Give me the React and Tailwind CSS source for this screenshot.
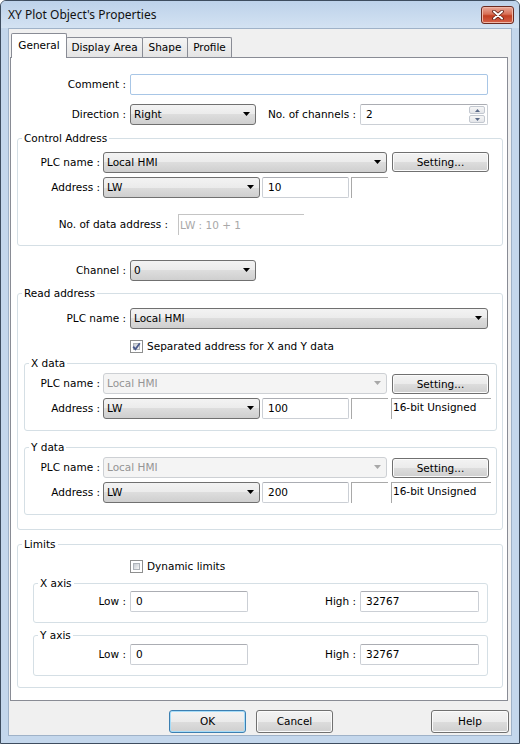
import React from "react";

const grayGrad = "bg-[linear-gradient(#f3f3f3,#ebebeb_50%,#dddddd_50%,#cfcfcf)]";

const Label = ({ className = "", children }) => (
  <div className={`shrink-0 whitespace-nowrap text-right ${className}`}>{children}</div>
);

const Combo = ({ className = "", value, disabled }) => (
  <div
    className={`relative flex h-[21px] shrink-0 items-center rounded-[3px] border pl-[3px] ${
      disabled
        ? "border-[#cdd0d4] bg-[#f4f4f4] text-[#959595]"
        : `border-[#707070] ${grayGrad} text-black`
    } ${className}`}
  >
    {value}
    <svg className="absolute right-[5px] top-[7px]" width="7" height="4" viewBox="0 0 7 4">
      <path d="M0 0h7L3.5 4z" fill={disabled ? "#a8a8a8" : "#000"} />
    </svg>
  </div>
);

const Field = ({ className = "", value, blue, children }) => (
  <div
    className={`relative flex h-[21px] shrink-0 items-center rounded-[2px] border bg-white pl-[5px] ${
      blue ? "border-[#a8c6e6]" : "border-[#cbcfd5] border-t-[#abadb3]"
    } ${className}`}
  >
    {value}
    {children}
  </div>
);

const Sunken = ({ className = "", children }) => (
  <div className={`h-[21px] shrink-0 border-l border-t border-[#a9a9a9] pl-[1px] pt-[2px] ${className}`}>
    {children}
  </div>
);

const Btn = ({ className = "", primary, children }) => (
  <div
    className={`flex shrink-0 items-center justify-center rounded-[3px] border ${grayGrad} ${
      primary
        ? "border-[#3c7fb1] shadow-[inset_0_0_0_1px_#a6dcf8]"
        : "border-[#707070] shadow-[inset_0_0_0_1px_#fbfbfb]"
    } ${className}`}
  >
    {children}
  </div>
);

const Check = ({ checked }) => (
  <div className="relative h-[13px] w-[13px] shrink-0 border border-[#8e8f8f] bg-white p-[2px]">
    <div className="h-full w-full border border-[#aeb3b9] bg-[linear-gradient(135deg,#c7ccd3,#f6f6f6)]" />
    {checked && (
      <svg className="absolute left-0 top-0" width="11" height="11" viewBox="0 0 11 11">
        <path d="M2.2 5.6L4.4 8.2L8.8 2.2" fill="none" stroke="#4a5a8c" strokeWidth="1.8" />
      </svg>
    )}
  </div>
);

const Group = ({ title, className = "", children }) => (
  <div className={`relative flex shrink-0 flex-col rounded-[3px] border border-[#d5dfe5] ${className}`}>
    <div className="absolute left-[4px] top-[-8px] bg-white px-[2px] leading-[14px]">{title}</div>
    {children}
  </div>
);

const Spinner = () => (
  <div className="absolute right-[2px] top-[1px] flex flex-col gap-[1px]">
    {["M0 3h5L2.5 0z", "M0 0h5L2.5 3z"].map((d) => (
      <div
        key={d}
        className="flex h-[8px] w-[16px] items-center justify-center rounded-[2px] border border-[#c3c8d0] bg-[linear-gradient(#f6f6f6,#e4e6ea)]"
      >
        <svg width="5" height="3" viewBox="0 0 5 3">
          <path d={d} fill="#5a6a88" />
        </svg>
      </div>
    ))}
  </div>
);

const DataGroup = ({ title, value, className = "" }) => (
  <Group title={title} className={`ml-[6px] h-[68px] w-[473px] ${className}`}>
    <div className="mt-[9px] flex items-start">
      <Label className="w-[75px] pt-[4px]">PLC name :</Label>
      <Combo className="ml-[3px] w-[284px]" value="Local HMI" disabled />
      <Btn className="ml-[5px] mt-[1px] h-[20px] w-[97px]">Setting...</Btn>
    </div>
    <div className="mt-[4px] flex items-center">
      <Label className="w-[75px]">Address :</Label>
      <Combo className="ml-[3px] w-[157px]" value="LW" />
      <Field className="ml-[2px] w-[87px]" value={value} />
      <Sunken className="ml-[2px] w-[37px]" />
      <Sunken className="ml-[3px] w-[100px]">16-bit Unsigned</Sunken>
    </div>
  </Group>
);

const AxisGroup = ({ title, className = "" }) => (
  <Group title={title} className={`ml-[15px] w-[455px] ${className}`}>
    <div className="flex items-center">
      <Label className="w-[92px]">Low :</Label>
      <Field className="ml-[4px] w-[118px]" value="0" />
      <Label className="w-[108px]">High :</Label>
      <Field className="ml-[4px] w-[119px]" value="32767" />
    </div>
  </Group>
);

export default function App() {
  return (
    <div className="h-[744px] w-[520px] bg-white font-['DejaVu_Sans',sans-serif] text-[10.5px] leading-[13px] text-black">
      <div className="flex h-full w-full flex-col rounded-t-[6px] border border-[#3e4d5f] bg-[#c4d7ec]">
        <div className="flex h-[27px] shrink-0 items-start justify-between rounded-t-[5px] bg-[linear-gradient(#bdd2ea,#d3e2f2)] pl-[7px] pr-[5px]">
          <div className="mt-[6px] font-['Noto_Sans',sans-serif] text-[12px] leading-[16px] text-[#111]">
            XY Plot Object's Properties
          </div>
          <div className="mt-[5px] flex h-[18px] w-[33px] items-center justify-center rounded-[3px] border border-[#6b2a20] bg-[linear-gradient(#e9a99a,#d86f55_45%,#c23f22_55%,#d6624a)] shadow-[inset_0_0_0_1px_#f0b8a8]">
            <svg width="12" height="10" viewBox="0 0 12 10">
              <path d="M2 1.5l8 7M10 1.5l-8 7" stroke="#5a1c12" strokeWidth="3.6" strokeLinecap="round" />
              <path d="M2 1.5l8 7M10 1.5l-8 7" stroke="#fff" strokeWidth="2" strokeLinecap="round" />
            </svg>
          </div>
        </div>

        <div className="mx-[7px] mb-[7px] flex flex-1 flex-col border border-[#9fb2c8] bg-[#f0f0f0]">
          {/* tabs */}
          <div className="ml-[2px] mt-[4px] flex h-[24px] shrink-0 items-end">
            <div className="relative z-10 mb-[-1px] flex h-[25px] w-[56px] justify-center rounded-t-[2px] border border-b-0 border-[#898c95] bg-white pt-[5px]">
              General
            </div>
            <div className="-ml-px flex h-[20px] w-[77px] items-center justify-center rounded-t-[2px] border border-b-0 border-[#898c95] bg-[linear-gradient(#f5f5f5,#e4e4e4)]">
              Display Area
            </div>
            <div className="-ml-px flex h-[20px] w-[46px] items-center justify-center rounded-t-[2px] border border-b-0 border-[#898c95] bg-[linear-gradient(#f5f5f5,#e4e4e4)]">
              Shape
            </div>
            <div className="-ml-px flex h-[20px] w-[45px] items-center justify-center rounded-t-[2px] border border-b-0 border-[#898c95] bg-[linear-gradient(#f5f5f5,#e4e4e4)]">
              Profile
            </div>
          </div>

          {/* panel */}
          <div className="ml-[1px] flex h-[644px] w-[498px] shrink-0 flex-col border border-[#898c95] bg-white">
            <div className="mt-[16px] flex items-center">
              <Label className="w-[115px]">Comment :</Label>
              <Field className="ml-[4px] w-[358px]" blue />
            </div>
            <div className="mt-[9px] flex items-center">
              <Label className="w-[115px]">Direction :</Label>
              <Combo className="ml-[4px] w-[126px]" value="Right" />
              <Label className="w-[100px]">No. of channels :</Label>
              <Field className="ml-[4px] w-[128px]" value="2">
                <Spinner />
              </Field>
            </div>

            <Group title="Control Address" className="ml-[6px] mt-[13px] h-[108px] w-[486px]">
              <div className="mt-[13px] flex items-start">
                <Label className="w-[82px] pt-[4px]">PLC name :</Label>
                <Combo className="ml-[3px] w-[284px]" value="Local HMI" />
                <Btn className="ml-[5px] h-[20px] w-[97px]">Setting...</Btn>
              </div>
              <div className="mt-[4px] flex items-center">
                <Label className="w-[82px]">Address :</Label>
                <Combo className="ml-[3px] w-[157px]" value="LW" />
                <Field className="ml-[2px] w-[87px]" value="10" />
                <Sunken className="ml-[2px] w-[37px]" />
              </div>
              <div className="mt-[16px] flex items-start">
                <Label className="w-[150px] pt-[4px]">No. of data address :</Label>
                <div className="ml-[10px] h-[21px] w-[126px] border-l border-t border-[#c4c4c4] pl-[1px] pt-[4px] text-[#a8a8a8]">
                  LW : 10 + 1
                </div>
              </div>
            </Group>

            <div className="mt-[14px] flex items-center">
              <Label className="w-[115px]">Channel :</Label>
              <Combo className="ml-[4px] w-[126px]" value="0" />
            </div>

            <Group title="Read address" className="ml-[6px] mt-[12px] h-[237px] w-[486px]">
              <div className="mt-[14px] flex items-center">
                <Label className="w-[108px]">PLC name :</Label>
                <Combo className="ml-[4px] w-[358px]" value="Local HMI" />
              </div>
              <div className="ml-[112px] mt-[11px] flex h-[13px] items-center">
                <Check checked />
                <span className="ml-[4px]">Separated address for X and Y data</span>
              </div>
              <DataGroup title="X data" value="100" className="mt-[10px]" />
              <DataGroup title="Y data" value="200" className="mt-[16px]" />
            </Group>

            <Group title="Limits" className="ml-[6px] mt-[14px] h-[144px] w-[486px]">
              <div className="ml-[112px] mt-[15px] flex h-[13px] items-center">
                <Check />
                <span className="ml-[4px]">Dynamic limits</span>
              </div>
              <AxisGroup title="X axis" className="mt-[10px] h-[40px] pt-[7px]" />
              <AxisGroup title="Y axis" className="mt-[12px] h-[41px] pt-[8px]" />
            </Group>
          </div>

          {/* buttons */}
          <div className="mt-[9px] flex h-[23px] shrink-0">
            <Btn primary className="ml-[160px] w-[77px]">OK</Btn>
            <Btn className="ml-[10px] w-[77px]">Cancel</Btn>
            <Btn className="ml-[98px] w-[78px]">Help</Btn>
          </div>
        </div>
      </div>
    </div>
  );
}
